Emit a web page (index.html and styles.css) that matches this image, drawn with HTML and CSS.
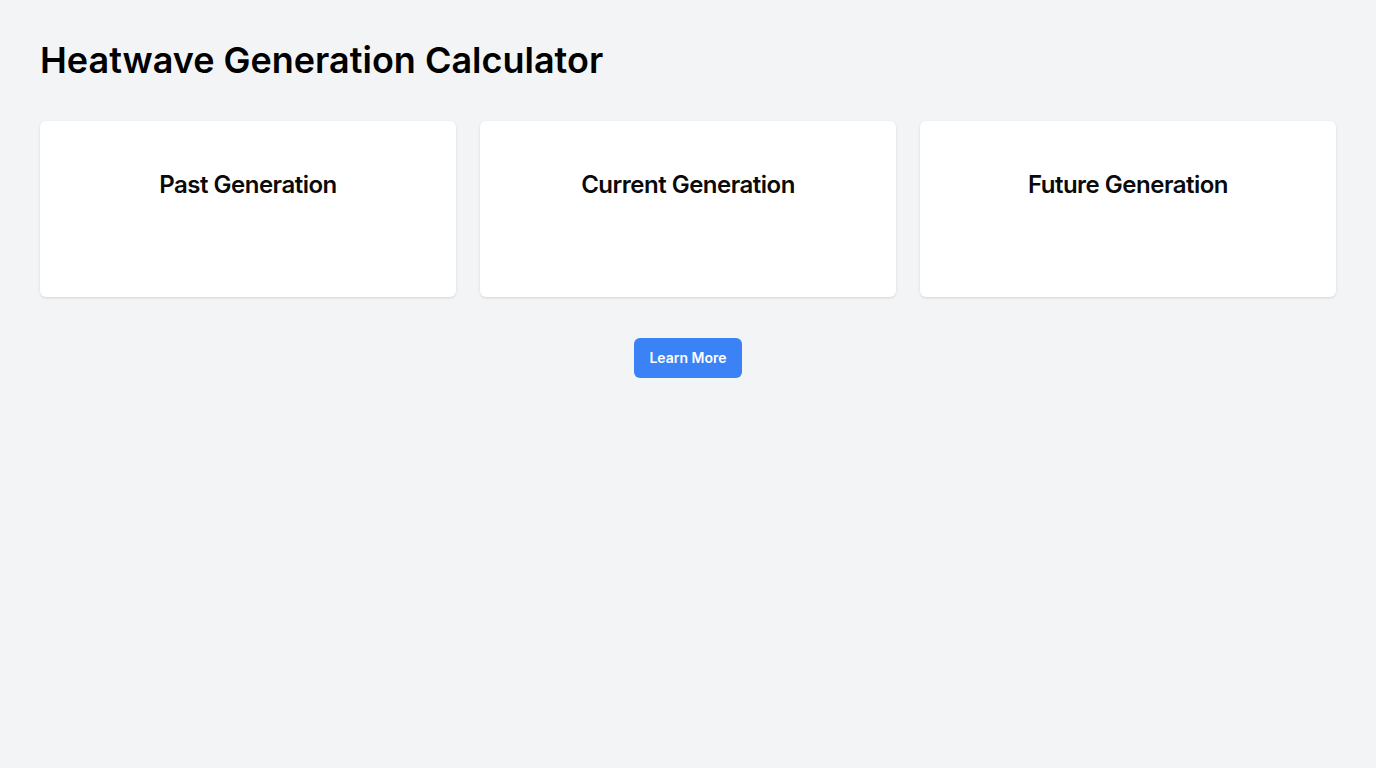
FILE: index.html
```html
<!DOCTYPE html>
<html lang="en">
<head>
<meta charset="utf-8">
<title>Heatwave Generation Calculator</title>
<link rel="stylesheet" href="styles.css">
</head>
<body>
<main class="page">
  <h1 class="title">Heatwave Generation Calculator</h1>
  <section class="cards">
    <div class="card"><h2 class="card-title">Past Generation</h2></div>
    <div class="card"><h2 class="card-title">Current Generation</h2></div>
    <div class="card"><h2 class="card-title">Future Generation</h2></div>
  </section>
  <div class="actions">
    <button class="btn">Learn More</button>
  </div>
</main>
</body>
</html>
```

FILE: styles.css
```css
* { box-sizing: border-box; }
html, body { margin: 0; padding: 0; }
body {
  background: #f3f4f6;
  font-family: Inter, "Noto Sans", sans-serif;
  color: #0a0a0a;
  min-height: 768px;
}
.page {
  padding: 40px;
}
.title {
  margin: 0;
  font-size: 36px;
  line-height: 40px;
  font-weight: 600;
  color: #000;
}
.cards {
  margin-top: 41px;
  display: grid;
  grid-template-columns: repeat(3, 1fr);
  gap: 24px;
}
.card {
  background: #fff;
  border-radius: 6px;
  height: 176px;
  padding: 48px 24px;
  box-shadow: 0 1px 3px 0 rgba(0,0,0,0.1), 0 1px 2px -1px rgba(0,0,0,0.1);
  text-align: center;
}
.card-title {
  margin: 0;
  font-size: 24px;
  line-height: 32px;
  font-weight: 600;
  letter-spacing: -0.5px;
  color: #0a0a0a;
}
.actions {
  margin-top: 41px;
  display: flex;
  justify-content: center;
}
.btn {
  background: #3b82f6;
  color: #fff;
  border: none;
  border-radius: 6px;
  font-family: Inter, "Noto Sans", sans-serif;
  font-size: 14px;
  line-height: 20px;
  font-weight: 600;
  padding: 10px 15px;
  height: 40px;
  cursor: pointer;
}
```
